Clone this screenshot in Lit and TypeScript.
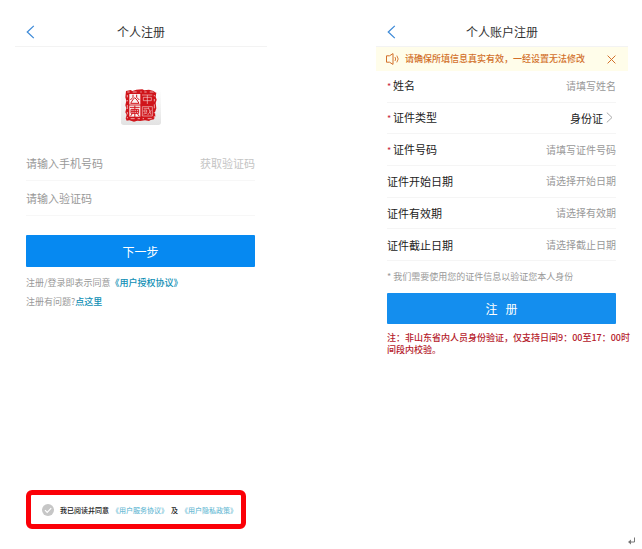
import { LitElement, html, css, svg } from "lit";
import { customElement, property } from "lit/decorators.js";

const base = css`
  * { box-sizing: border-box; }
  button, input, select {
    font: inherit;
    color: inherit;
    margin: 0;
    padding: 0;
    border: 0;
    background: none;
    min-width: 0;
    outline: none;
  }
  button { cursor: pointer; }
  a { text-decoration: none; }
  svg { display: block; flex: none; }
`;

@customElement("nav-header")
class NavHeader extends LitElement {
  @property() heading = "";

  static styles = [base, css`
    :host { display: block; }
    .bar {
      display: grid;
      grid-template-columns: 1fr auto 1fr;
      align-items: center;
      height: 29px;
      padding: 0 11px;
      border-bottom: 1px solid #f3f3f3;
    }
    .back { justify-self: start; }
    .title { margin: 0; font-size: 12px; line-height: 16px; font-weight: 400; color: #333; }
  `];

  render() {
    return html`
      <header class="bar">
        <button class="back" type="button" aria-label="返回">
          <svg width="9" height="14" viewBox="0 0 9 14">
            <path d="M7.8 0.9L1.3 7l6.5 6.1" fill="none" stroke="#3f8bd8" stroke-width="1.3" />
          </svg>
        </button>
        <h1 class="title">${this.heading}</h1>
      </header>`;
  }
}

const seal = svg`
  <defs>
    <linearGradient id="tile" x1="0" y1="0" x2="0" y2="1">
      <stop offset="0" stop-color="#fff" />
      <stop offset="0.5" stop-color="#f3f3f3" />
      <stop offset="1" stop-color="#e2e2e2" />
    </linearGradient>
  </defs>
  <rect x="0" y="4" width="120" height="107" rx="8" fill="url(#tile)" />
  <path fill="#d0141a" d="M15 9l14-3 5 3 12-4 18-1 6 3 14-2 14 4 4 4 4 1-2 12 3 9-3 10 2 16-4 12 1 12-4 9-10 2-5 3-12-2-14 2-9-1-10 3-14-4-8 1-3-7 3-10-4-8 3-12-3-9 3-14-3-10z" />
  <path fill="none" stroke="#f8eeee" stroke-width="2" stroke-dasharray="7 9 12 11 4 8" d="M19 12H100V92H19z" />
  <path fill="#fbf3f2" d="M25 18h33v68H25z" />
  <path fill="none" stroke="#d0141a" stroke-width="3" d="M23 51H60M36 20v8l-8 8M47 20v8l8 8M29 46l6-10 6-7 7 7 6 10H29" />
  <path fill="none" stroke="#d0141a" stroke-width="3" d="M27 58H56M30 64H53V76H30zM30 70H53M41.500 53V87M36 63v13M47 63v13M34 77l-6 8M49 77l6 8" />
  <path fill="none" stroke="#f7dada" stroke-width="1.800" d="M63 21H94M67 28H91V38H67zM79 21V48" />
  <path fill="none" stroke="#f7dada" stroke-width="1.800" d="M64 56H94V84H64zM68 61H84M69 66h8v6h-8zM67 78l12-3M82 58l8 22M91 66l-11 15" />
`;

@customElement("phone-signup")
class PhoneSignup extends LitElement {
  static styles = [base, css`
    :host { display: flex; flex-direction: column; }
    .form { display: flex; flex-direction: column; margin: 0; padding: 0 12px 0 11px; }
    .seal { align-self: center; margin: 41px 0 21px; }
    .field {
      display: flex;
      align-items: center;
      height: 35px;
      font-size: 11px;
      line-height: 16px;
      color: #999;
      border-bottom: 1px solid #f7f7f7;
    }
    .entry { flex: 1; }
    .entry::placeholder { color: #999; opacity: 1; }
    .code { color: #c4c4c4; }
    .next {
      height: 32px;
      margin: 19px 0 6px;
      border-radius: 1px;
      background: #0689f1;
      color: #fff;
      font-size: 12px;
    }
    .line { margin: 0; font-size: 9px; line-height: 19px; color: #999; white-space: nowrap; }
    .line a { color: #0d8eb4; font-weight: 500; }
    .consent {
      display: flex;
      align-items: center;
      align-self: flex-start;
      gap: 6px;
      height: 39px;
      margin: auto 0 0 11px;
      padding: 0 4px 0 11px;
      border: 5px solid #fb0007;
      border-radius: 6px;
      font-size: 7px;
      line-height: 12px;
      color: #222;
      white-space: nowrap;
    }
    .tick { display: grid; }
    .tick > * { grid-area: 1 / 1; }
    .box { appearance: none; width: 12px; height: 12px; border-radius: 50%; background: #c6c6c6; }
    .mark { pointer-events: none; }
    .terms { display: flex; gap: 3px; font-weight: 500; }
    .terms a { color: #6fbdd6; }
  `];

  render() {
    return html`
      <nav-header heading="个人注册"></nav-header>
      <form class="form">
        <svg class="seal" width="40" height="37" viewBox="0 0 120 111" role="img" aria-label="中国山东">${seal}</svg>
        <div class="field">
          <input class="entry" type="tel" aria-label="手机号码" placeholder="请输入手机号码" />
          <button class="code" type="button">获取验证码</button>
        </div>
        <div class="field">
          <input class="entry" type="text" aria-label="验证码" placeholder="请输入验证码" />
        </div>
        <button class="next" type="button">下一步</button>
        <p class="line">注册/登录即表示同意<a href="#auth">《用户授权协议》</a></p>
        <p class="line">注册有问题?<a href="#help">点这里</a></p>
      </form>
      <div class="consent">
        <span class="tick">
          <input class="box" id="agree" type="checkbox" checked />
          <svg class="mark" width="12" height="12" viewBox="0 0 12 12">
            <path d="M3 6.200l2.200 2.200L9.200 4.200" fill="none" stroke="#fff" stroke-width="1.200" />
          </svg>
        </span>
        <span class="terms">
          <label for="agree">我已阅读并同意</label>
          <a href="#service">《用户服务协议》</a>
          <span>及</span>
          <a href="#privacy">《用户隐私政策》</a>
        </span>
      </div>`;
  }
}

interface Field { id: string; label: string; hint: string; required?: boolean; options?: string[]; }

const fields: Field[] = [
  { id: "name", label: "姓名", hint: "请填写姓名", required: true },
  { id: "type", label: "证件类型", hint: "", required: true, options: ["身份证"] },
  { id: "number", label: "证件号码", hint: "请填写证件号码", required: true },
  { id: "start", label: "证件开始日期", hint: "请选择开始日期" },
  { id: "valid", label: "证件有效期", hint: "请选择有效期" },
  { id: "end", label: "证件截止日期", hint: "请选择截止日期" },
];

@customElement("account-signup")
class AccountSignup extends LitElement {
  static styles = [base, css`
    :host { display: flex; flex-direction: column; }
    .notice {
      display: flex;
      align-items: center;
      gap: 6px;
      height: 24px;
      padding: 0 12px 0 10px;
      background: #fffdea;
      color: #d2702a;
      font-size: 9px;
      line-height: 14px;
      font-weight: 500;
      white-space: nowrap;
    }
    .message { flex: 1; }
    .form { display: flex; flex-direction: column; margin: 0; padding: 0 12px 0 11px; }
    .rows { display: grid; grid-auto-rows: 1fr; min-height: 190px; }
    .row { display: flex; align-items: center; border-bottom: 1px solid #f5f5f5; }
    .label { font-size: 11px; line-height: 16px; color: #222; white-space: nowrap; }
    .star { color: #c8283c; display: inline-block; width: 6px; font-size: 9px; }
    .value { flex: 1; text-align: right; font-size: 10px; line-height: 16px; }
    .value::placeholder { color: #999; opacity: 1; }
    .choice {
      flex: 1;
      appearance: none;
      text-align-last: right;
      font-size: 11px;
      line-height: 16px;
      color: #222;
    }
    .chevron { margin: 0 3px; }
    .hint { margin: 0; padding: 8px 0; font-size: 9px; line-height: 16px; color: #999; white-space: nowrap; }
    .submit {
      height: 31px;
      border-radius: 1px;
      background: #148eee;
      color: #fff;
      font-size: 12px;
      white-space: pre;
    }
    .note { margin: 8px -14px 0 0; font-size: 9px; line-height: 12px; font-weight: 500; color: #b5202b; white-space: nowrap; }
  `];

  render() {
    return html`
      <nav-header heading="个人账户注册"></nav-header>
      <div class="notice">
        <svg width="13" height="12" viewBox="0 0 13 12" fill="none" stroke="#d2702a">
          <path d="M0.500 2.800H3.500L7 0.600V11.400L3.500 9.200H0.500z" />
          <path d="M9 4Q10.300 6 9 8M10.800 2.600Q13.600 6 10.800 9.400" stroke-width="0.900" />
        </svg>
        <span class="message">请确保所填信息真实有效，一经设置无法修改</span>
        <button type="button" aria-label="关闭">
          <svg width="9" height="9" viewBox="0 0 9 9">
            <path d="M0.600 0.600l7.800 7.800M8.400 0.600L0.600 8.400" stroke="#d2702a" />
          </svg>
        </button>
      </div>
      <form class="form">
        <div class="rows">
          ${fields.map((f) => html`
            <div class="row">
              <label class="label" for=${f.id}>${f.required ? html`<span class="star">*</span>` : ""}${f.label}</label>
              ${f.options
                ? html`
                    <select class="choice" id=${f.id}>${f.options.map((o) => html`<option>${o}</option>`)}</select>
                    <svg class="chevron" width="7" height="11" viewBox="0 0 7 11">
                      <path d="M0.800 0.600L6 5.500L0.800 10.400" fill="none" stroke="#aaa" />
                    </svg>`
                : html`<input class="value" id=${f.id} type="text" placeholder=${f.hint} />`}
            </div>`)}
        </div>
        <p class="hint">* 我们需要使用您的证件信息以验证您本人身份</p>
        <button class="submit" type="button">注   册</button>
        <p class="note">注：非山东省内人员身份验证，仅支持日间9：00至17：00时<br />间段内校验。</p>
      </form>`;
  }
}

@customElement("app-root")
class AppRoot extends LitElement {
  static styles = [base, css`
    :host {
      display: flex;
      flex-direction: column;
      min-height: 100vh;
      box-sizing: border-box;
      padding-top: 18px;
      background: #fff;
      font-family: "Noto Sans CJK SC", sans-serif;
    }
    .screens {
      flex: 1;
      display: grid;
      grid-template-columns: repeat(2, minmax(0, 1fr));
      column-gap: 109px;
      padding: 0 14px 0 15px;
    }
    .footer { display: flex; justify-content: flex-end; align-items: center; height: 20px; padding: 4px 7px 0 0; }
  `];

  render() {
    return html`
      <main class="screens">
        <phone-signup></phone-signup>
        <account-signup></account-signup>
      </main>
      <footer class="footer">
        <svg width="7" height="8" viewBox="0 0 7 8">
          <path d="M6.500 0.500V5H1" fill="none" stroke="#777" />
          <path d="M0 5L3 2.500V7.500z" fill="#777" />
        </svg>
      </footer>`;
  }
}
